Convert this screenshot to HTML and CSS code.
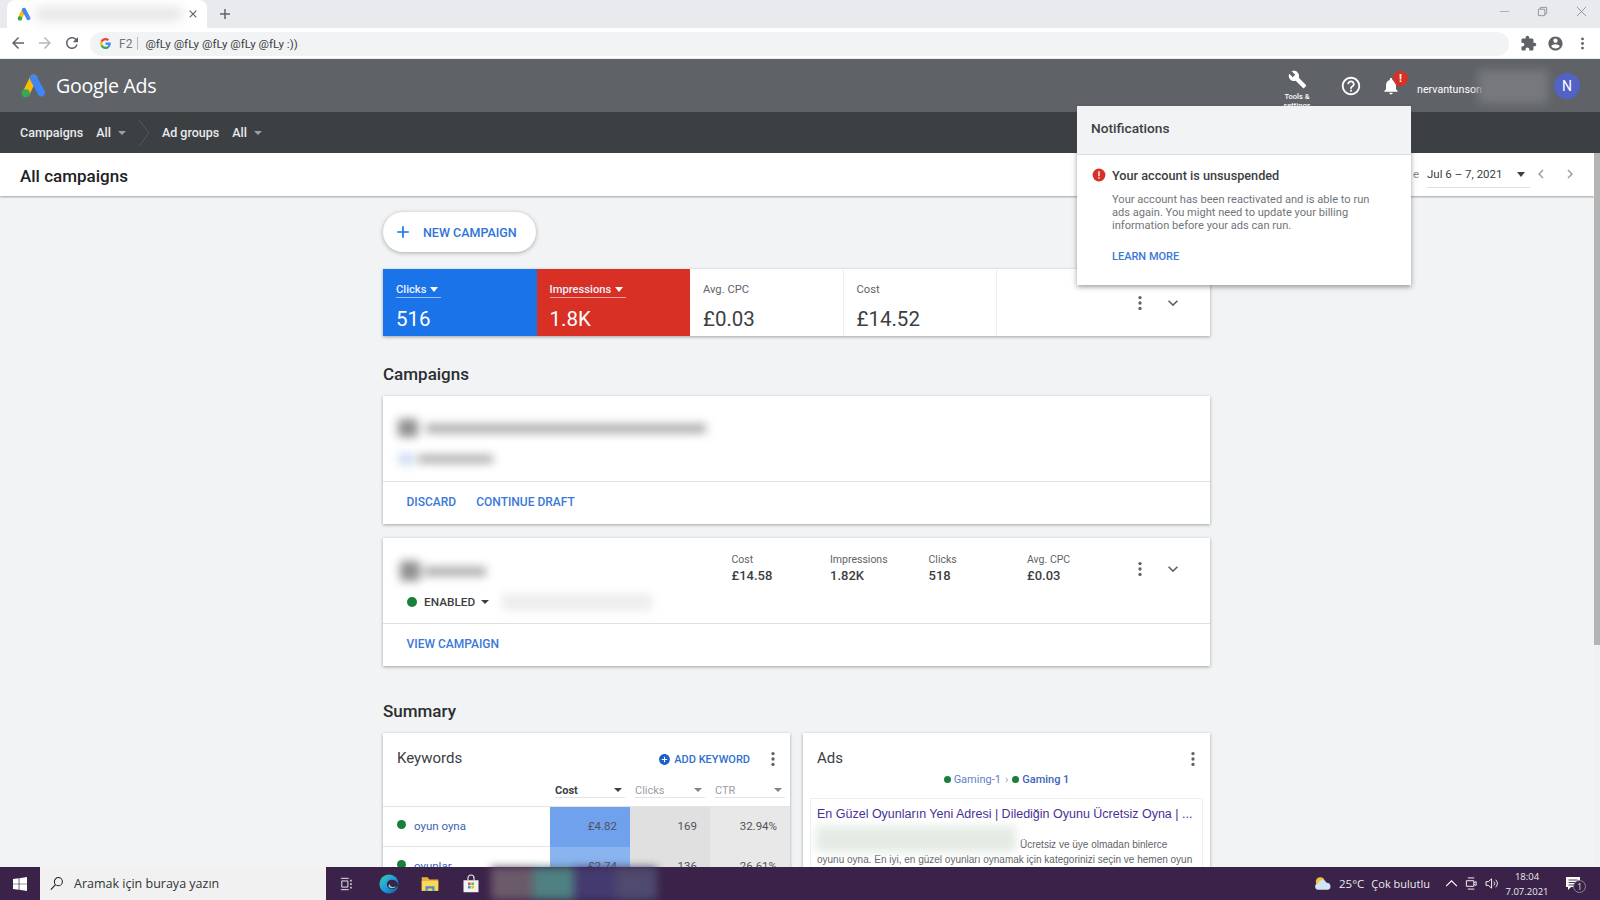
FILE: index.html
```html
<!DOCTYPE html>
<html lang="en">
<head>
<meta charset="utf-8">
<title>Google Ads</title>
<link rel="stylesheet" href="styles.css">
</head>
<body>
<div class="tabstrip">
  <div class="tab">
    <svg class="favicon" viewBox="0 0 24 24"><line x1="12" y1="5" x2="5" y2="19" stroke="#fbbc04" stroke-width="7" stroke-linecap="round"/><line x1="12" y1="5" x2="19.5" y2="19" stroke="#4285f4" stroke-width="7" stroke-linecap="round"/><circle cx="5" cy="19.5" r="3.8" fill="#34a853"/></svg>
    <div class="tab-blur"></div>
    <svg class="tab-x" viewBox="0 0 12 12"><path d="M2 2l8 8M10 2l-8 8" stroke="#5f6368" stroke-width="1.4"/></svg>
  </div>
  <svg class="newtab" viewBox="0 0 12 12"><path d="M6 1v10M1 6h10" stroke="#5f6368" stroke-width="1.5"/></svg>
  <div class="winctl">
    <svg viewBox="0 0 12 12"><path d="M1 6h10" stroke="#a6a9ad" stroke-width="1"/></svg>
    <svg viewBox="0 0 12 12"><path d="M1.5 3.5h7v7h-7zM3.5 3.5v-2h7v7h-2" fill="none" stroke="#8d9094" stroke-width="1"/></svg>
    <svg viewBox="0 0 12 12"><path d="M1 1l10 10M11 1L1 11" stroke="#8d9094" stroke-width="1"/></svg>
  </div>
</div>

<div class="toolbar">
  <svg class="tb-icon" viewBox="0 0 24 24"><path fill="#5f6368" d="M20 11H7.83l5.59-5.59L12 4l-8 8 8 8 1.41-1.41L7.83 13H20v-2z"/></svg>
  <svg class="tb-icon" viewBox="0 0 24 24"><path fill="#b4b7bb" d="M12 4l-1.41 1.41L16.17 11H4v2h12.17l-5.58 5.59L12 20l8-8z"/></svg>
  <svg class="tb-icon" viewBox="0 0 24 24"><path fill="#5f6368" d="M17.65 6.35C16.2 4.9 14.21 4 12 4c-4.42 0-7.99 3.58-7.99 8s3.57 8 7.99 8c3.73 0 6.84-2.55 7.73-6h-2.08c-.82 2.33-3.04 4-5.65 4-3.31 0-6-2.69-6-6s2.69-6 6-6c1.66 0 3.14.69 4.22 1.78L13 11h7V4l-2.35 2.35z"/></svg>
  <div class="omnibox">
    <svg class="g-logo" viewBox="0 0 48 48"><path fill="#ea4335" d="M24 9.5c3.9 0 6.9 1.6 8.9 3.4l6.5-6.4C35.4 2.9 30.2.5 24 .5 14.8.5 6.9 5.8 3 13.5l7.6 5.9C12.4 13.6 17.7 9.5 24 9.5z"/><path fill="#4285f4" d="M47 24.5c0-1.7-.2-3.3-.5-4.5H24v9h12.9c-.6 3.1-2.3 5.7-4.9 7.4l7.4 5.8C43.8 38.1 47 32 47 24.5z"/><path fill="#fbbc05" d="M10.6 28.6c-.5-1.4-.7-2.9-.7-4.6s.3-3.2.7-4.6L3 13.5C1.4 16.7.5 20.2.5 24s.9 7.3 2.5 10.5l7.6-5.9z"/><path fill="#34a853" d="M24 47.5c6.2 0 11.500-2 15.400-5.500L32 36.200c-2.100 1.400-4.700 2.300-8 2.300-6.300 0-11.600-4.100-13.400-9.900L3 34.500C6.900 42.200 14.800 47.500 24 47.500z"/></svg>
    <span class="omni-key">F2</span>
    <span class="omni-sep"></span>
    <span class="omni-text">@fLy @fLy @fLy @fLy @fLy :))</span>
  </div>
  <div class="tb-right">
    <svg viewBox="0 0 24 24"><path fill="#5f6368" d="M20.500 11H19V7c0-1.100-.9-2-2-2h-4V3.500C13 2.120 11.880 1 10.500 1S8 2.120 8 3.500V5H4c-1.100 0-1.990.9-1.990 2v3.800H3.500c1.490 0 2.700 1.210 2.700 2.700s-1.210 2.700-2.700 2.700H2V20c0 1.100.9 2 2 2h3.800v-1.500c0-1.490 1.210-2.700 2.700-2.700 1.490 0 2.700 1.210 2.700 2.700V22H17c1.100 0 2-.9 2-2v-4h1.500c1.380 0 2.500-1.120 2.500-2.500S21.880 11 20.500 11z"/></svg>
    <svg viewBox="0 0 24 24"><path fill="#5f6368" d="M12 2C6.480 2 2 6.480 2 12s4.480 10 10 10 10-4.480 10-10S17.520 2 12 2zm0 3c1.660 0 3 1.340 3 3s-1.340 3-3 3-3-1.340-3-3 1.340-3 3-3zm0 14.200c-2.500 0-4.710-1.280-6-3.220.03-1.990 4-3.080 6-3.080 1.990 0 5.970 1.090 6 3.080-1.290 1.940-3.500 3.220-6 3.220z"/></svg>
    <svg viewBox="0 0 24 24"><g fill="#5f6368"><circle cx="12" cy="5.500" r="2"/><circle cx="12" cy="12" r="2"/><circle cx="12" cy="18.500" r="2"/></g></svg>
  </div>
</div>

<div class="app">
  <header class="hdr">
    <svg class="ads-logo" viewBox="0 0 24 24"><line x1="12" y1="5" x2="5" y2="19" stroke="#fbbc04" stroke-width="7" stroke-linecap="round"/><line x1="12" y1="5" x2="19.500" y2="19" stroke="#4285f4" stroke-width="7" stroke-linecap="round"/><circle cx="4.500" cy="19.500" r="3.900" fill="#34a853"/></svg>
    <span class="ads-name">Google Ads</span>
    <div class="hdr-right">
      <div class="tools">
        <svg viewBox="0 0 24 24"><path fill="#fff" d="M22.700 19l-9.100-9.100c.9-2.300.4-5-1.500-6.900-2-2-5-2.400-7.400-1.300L9 6 6 9 1.600 4.700C.4 7.100.9 10.100 2.900 12.100c1.900 1.900 4.600 2.400 6.900 1.500l9.100 9.100c.4.4 1 .4 1.400 0l2.300-2.300c.5-.4.5-1.100.1-1.400z"/></svg>
        <span>Tools &amp;<br>settings</span>
      </div>
      <svg class="help" viewBox="0 0 24 24"><path fill="#fff" d="M11 18h2v-2h-2v2zm1-16C6.480 2 2 6.480 2 12s4.480 10 10 10 10-4.480 10-10S17.520 2 12 2zm0 18c-4.410 0-8-3.590-8-8s3.590-8 8-8 8 3.590 8 8-3.590 8-8 8zm0-14c-2.210 0-4 1.790-4 4h2c0-1.100.9-2 2-2s2 .9 2 2c0 2-3 1.750-3 5h2c0-2.250 3-2.500 3-5 0-2.210-1.790-4-4-4z"/></svg>
      <div class="bell">
        <svg viewBox="0 0 24 24"><path fill="#fff" d="M12 22c1.100 0 2-.9 2-2h-4c0 1.100.89 2 2 2zm6-6v-5c0-3.070-1.640-5.640-4.500-6.320V4c0-.83-.67-1.500-1.500-1.500s-1.500.67-1.500 1.500v.68C7.630 5.360 6 7.920 6 11v5l-2 2v1h16v-1l-2-2z"/></svg>
        <span class="bell-badge">!</span>
      </div>
      <span class="user">nervantunson</span>
      <div class="user-blur"></div>
      <div class="avatar">N</div>
    </div>
  </header>

  <nav class="nav">
    <span class="nav-item">Campaigns</span>
    <span class="nav-all">All</span><i class="caret nav-caret"></i>
    <svg class="nav-chev" viewBox="0 0 12 26"><path d="M1 0l10 13L1 26" fill="none" stroke="#55595d" stroke-width="1"/></svg>
    <span class="nav-item">Ad groups</span>
    <span class="nav-all">All</span><i class="caret nav-caret"></i>
  </nav>

  <div class="page">
    <main class="main">
      <div class="titlebar">
        <h1>All campaigns</h1>
        <div class="dates">
          <span class="date-clip">e</span>
          <div class="date-select"><span>Jul 6 – 7, 2021</span><i class="caret caret-dark"></i></div>
          <svg viewBox="0 0 24 24"><path fill="#9aa0a6" d="M15.410 7.410L14 6l-6 6 6 6 1.410-1.410L10.830 12z"/></svg>
          <svg viewBox="0 0 24 24"><path fill="#9aa0a6" d="M10 6L8.590 7.410 13.170 12l-4.580 4.590L10 18l6-6z"/></svg>
        </div>
      </div>

      <div class="column">
        <button class="new-btn">
          <svg viewBox="0 0 24 24"><path fill="#1a73e8" d="M19 13h-6v6h-2v-6H5v-2h6V5h2v6h6v2z"/></svg>
          NEW CAMPAIGN
        </button>

        <section class="scorecards card">
          <div class="tile tile-blue"><span class="tile-label">Clicks <i class="caret caret-white"></i></span><span class="tile-value">516</span></div>
          <div class="tile tile-red"><span class="tile-label">Impressions <i class="caret caret-white"></i></span><span class="tile-value">1.8K</span></div>
          <div class="tile"><span class="tile-label">Avg. CPC</span><span class="tile-value">£0.03</span></div>
          <div class="tile"><span class="tile-label">Cost</span><span class="tile-value">£14.52</span></div>
          <div class="tile-end">
            <svg class="dots" viewBox="0 0 24 24"><g fill="#5f6368"><circle cx="12" cy="5.500" r="2"/><circle cx="12" cy="12" r="2"/><circle cx="12" cy="18.500" r="2"/></g></svg>
            <svg class="chev" viewBox="0 0 24 24"><path fill="#5f6368" d="M16.590 8.590L12 13.170 7.410 8.590 6 10l6 6 6-6z"/></svg>
          </div>
        </section>

        <h2 class="sec-campaigns">Campaigns</h2>

        <section class="card draft">
          <div class="draft-body">
            <div class="blur blur-a"><i></i><b></b></div>
            <div class="blur blur-b"><i></i><b></b></div>
          </div>
          <div class="actions"><a>DISCARD</a><a>CONTINUE DRAFT</a></div>
        </section>

        <section class="card camp">
          <div class="camp-body">
            <div class="camp-left">
              <div class="blur blur-c"><i></i><b></b></div>
              <div class="status"><i class="dot dot-green"></i><span>ENABLED</span><i class="caret caret-dark"></i><div class="blur-d"></div></div>
            </div>
            <div class="stats">
              <div class="stat"><span>Cost</span><b>£14.58</b></div>
              <div class="stat"><span>Impressions</span><b>1.82K</b></div>
              <div class="stat"><span>Clicks</span><b>518</b></div>
              <div class="stat"><span>Avg. CPC</span><b>£0.03</b></div>
            </div>
            <div class="tile-end camp-end">
              <svg class="dots" viewBox="0 0 24 24"><g fill="#5f6368"><circle cx="12" cy="5.500" r="2"/><circle cx="12" cy="12" r="2"/><circle cx="12" cy="18.500" r="2"/></g></svg>
              <svg class="chev" viewBox="0 0 24 24"><path fill="#5f6368" d="M16.590 8.590L12 13.170 7.410 8.590 6 10l6 6 6-6z"/></svg>
            </div>
          </div>
          <div class="actions"><a>VIEW CAMPAIGN</a></div>
        </section>

        <h2 class="sec-summary">Summary</h2>

        <div class="summary">
          <section class="card panel">
            <div class="panel-head">
              <h3>Keywords</h3>
              <a class="add-kw"><svg viewBox="0 0 24 24"><path fill="#1a62c8" d="M12 2C6.480 2 2 6.480 2 12s4.480 10 10 10 10-4.480 10-10S17.520 2 12 2zm5 11h-4v4h-2v-4H7v-2h4V7h2v4h4v2z"/></svg>ADD KEYWORD</a>
              <svg class="dots" viewBox="0 0 24 24"><g fill="#5f6368"><circle cx="12" cy="5.500" r="2"/><circle cx="12" cy="12" r="2"/><circle cx="12" cy="18.500" r="2"/></g></svg>
            </div>
            <div class="kw-cols">
              <div class="kw-col kw-col-on"><span>Cost</span><i class="caret caret-dark"></i></div>
              <div class="kw-col"><span>Clicks</span><i class="caret caret-grey"></i></div>
              <div class="kw-col"><span>CTR</span><i class="caret caret-grey"></i></div>
            </div>
            <div class="kw-row">
              <div class="kw-name"><i class="dot dot-green2"></i><a>oyun oyna</a></div>
              <div class="kw-num kw-b1">£4.82</div><div class="kw-num kw-g1">169</div><div class="kw-num kw-g2">32.94%</div>
            </div>
            <div class="kw-row">
              <div class="kw-name"><i class="dot dot-green2"></i><a>oyunlar</a></div>
              <div class="kw-num kw-b2">£2.74</div><div class="kw-num kw-g1">136</div><div class="kw-num kw-g2">26.61%</div>
            </div>
          </section>
          <section class="card panel">
            <div class="panel-head ads-head">
              <h3>Ads</h3>
              <svg class="dots" viewBox="0 0 24 24"><g fill="#5f6368"><circle cx="12" cy="5.500" r="2"/><circle cx="12" cy="12" r="2"/><circle cx="12" cy="18.500" r="2"/></g></svg>
            </div>
            <div class="crumbs"><i class="dot dot-crumb"></i><a>Gaming-1</a><em>›</em><i class="dot dot-crumb"></i><a class="strong">Gaming 1</a></div>
            <div class="ad-box">
              <div class="ad-title">En Güzel Oyunların Yeni Adresi | Dilediğin Oyunu Ücretsiz Oyna | ...</div>
              <div class="ad-line"><div class="ad-blur"></div><span>Ücretsiz ve üye olmadan binlerce</span></div>
              <div class="ad-text">oyunu oyna. En iyi, en güzel oyunları oynamak için kategorinizi seçin ve hemen oyun</div>
            </div>
          </section>
        </div>
      </div>
    </main>
    <div class="scrollbar"><div class="thumb"></div></div>
  </div>

  <aside class="notif">
    <div class="notif-head">Notifications</div>
    <div class="notif-body">
      <div class="notif-title">
        <svg viewBox="0 0 24 24"><circle cx="12" cy="12" r="11" fill="#d93025"/><path fill="#fff" d="M10.800 5.500h2.400v8.500h-2.400zM10.800 15.800h2.400v2.500h-2.400z"/></svg>
        <span>Your account is unsuspended</span>
      </div>
      <p>Your account has been reactivated and is able to run ads again. You might need to update your billing information before your ads can run.</p>
      <a>LEARN MORE</a>
    </div>
  </aside>
</div>

<footer class="taskbar">
  <svg class="tk-win" viewBox="0 0 16 16"><path fill="#fff" d="M0 2.300l6.500-.9v6.200H0zM7.300 1.300L16 0v7.600H7.300zM0 8.400h6.500v6.200L0 13.700zM7.300 8.400H16V16l-8.700-1.300z"/></svg>
  <div class="tk-search">
    <svg viewBox="0 0 16 16"><circle cx="10" cy="6" r="4.300" fill="none" stroke="#222" stroke-width="1.100"/><path d="M7 9.300L2 14.500" stroke="#222" stroke-width="1.200"/></svg>
    <span>Aramak için buraya yazın</span>
  </div>
  <svg class="tk-view" viewBox="0 0 16 16"><path d="M1 1.500h9M1 14.500h9M2 4.500h7v7H2z" fill="none" stroke="#fff" stroke-width="1"/><path d="M12.500 3v2M12.500 7v2M12.500 11v2" stroke="#fff" stroke-width="1.500"/></svg>
  <svg class="tk-app tk-edge" viewBox="0 0 24 24"><defs><linearGradient id="edgeg" x1="0" y1="0" x2="1" y2="1"><stop offset="0" stop-color="#3bd3a0"/><stop offset=".5" stop-color="#1f9be0"/><stop offset="1" stop-color="#0c59a4"/></linearGradient></defs><circle cx="12" cy="12" r="11.500" fill="url(#edgeg)"/><path fill="#3a2249" d="M23 13c-1-4-4-6-7.500-6C12 7 9.500 9.500 9.500 12.500c0 3 2.500 5.500 6 5.500 2.500 0 5-1 6.500-2.500l1-2.500z"/><path fill="#7be0b4" d="M21 15c-1.500 1.500-3.500 2-5.500 2-2.500 0-4-1.500-4-3 0-1 .7-1.600 1.500-2-.5 2 1.500 3.500 3.500 3.500 1.800 0 3.200-.2 4.500-.5z"/></svg>
  <svg class="tk-app tk-folder" viewBox="0 0 24 24"><path fill="#e8b33a" d="M1 3h8l2 3h12v15H1z"/><path fill="#fbd75b" d="M1 8h22v13H1z"/><path fill="#4a8fc7" d="M6 21v-6h12v6h-3v-3H9v3z"/></svg>
  <svg class="tk-app tk-store" viewBox="0 0 24 24"><path d="M8 7V4a4 4 0 0 1 8 0v3" fill="none" stroke="#e8e8e8" stroke-width="1.600"/><path fill="#f2f2f2" d="M2 7h20v16H2z"/><path fill="#e8502f" d="M8 10h3.500v3.500H8z"/><path fill="#7cb82f" d="M12.500 10H16v3.500h-3.500z"/><path fill="#1ea1e8" d="M8 14.500h3.500V18H8z"/><path fill="#fcb813" d="M12.500 14.500H16V18h-3.500z"/></svg>
  <div class="tk-blur"><i></i><i></i><i></i><i></i></div>
  <div class="tk-tray">
    <svg class="tk-cloud" viewBox="0 0 20 16"><circle cx="7" cy="6" r="5" fill="#f5c542"/><path fill="#cfe6f7" d="M5 15a3.500 3.500 0 0 1-.4-7 5 5 0 0 1 9.400-.8A4 4 0 0 1 15.500 15z"/></svg>
    <span class="tk-temp">25°C</span>
    <span class="tk-weather">Çok bulutlu</span>
    <svg class="tk-sm tk-up" viewBox="0 0 12 12"><path d="M1 8.500l5-5 5 5" fill="none" stroke="#fff" stroke-width="1"/></svg>
    <svg class="tk-sm tk-cam" viewBox="0 0 14 14"><path d="M3 1h7M3 13h7M1.500 4h8v6h-8zM9.500 6l2.500-1v4l-2.500-1" fill="none" stroke="#fff" stroke-width="1"/></svg>
    <svg class="tk-sm tk-vol" viewBox="0 0 16 14"><path d="M1 5v4h2.500L7 12V2L3.500 5zM9.500 5a3 3 0 0 1 0 4M11.500 3a6 6 0 0 1 0 8" fill="none" stroke="#fff" stroke-width="1"/></svg>
    <div class="tk-clock"><span>18:04</span><span>7.07.2021</span></div>
    <div class="tk-notif">
      <svg viewBox="0 0 14 14"><path fill="#fff" d="M0 0h14v10H5l-3 3v-3H0z"/><path d="M2.500 3h9M2.500 5.500h9M2.500 8h6" stroke="#3a2249" stroke-width=".9"/></svg>
      <span>1</span>
    </div>
  </div>
</footer>
</body>
</html>
```
FILE: styles.css
```css
* { box-sizing: border-box; }
html, body { margin: 0; padding: 0; }
body {
  width: 1600px; height: 900px; overflow: hidden;
  display: flex; flex-direction: column;
  font-family: Roboto, "Liberation Sans", sans-serif;
  background: #f1f3f4; color: #202124;
}
h1, h2, h3, p { margin: 0; }
i { display: block; }
a { cursor: pointer; }

.caret { width: 0; height: 0; border-left: 4.5px solid transparent; border-right: 4.5px solid transparent; border-top: 5px solid #fff; }
.caret-white { display: inline-block; border-top-color: #fff; margin-left: 1px; vertical-align: 1px; }
.caret-dark { border-top-color: #3c4043; }
.caret-grey { border-top-color: #80868b; }

/* browser chrome */
.tabstrip { height: 28px; flex: none; background: #e8eaed; display: flex; align-items: flex-end; position: relative; }
.tab { margin-left: 7px; width: 200px; height: 28px; background: #fff; border-radius: 8px 8px 0 0; display: flex; align-items: center; }
.favicon { width: 14px; height: 14px; margin-left: 10px; flex: none; }
.tab-blur { width: 146px; height: 14px; margin-left: 5px; background: #e4e5e6; filter: blur(6px); }
.tab-x { width: 10px; height: 10px; margin-left: 6px; }
.newtab { width: 12px; height: 12px; margin: 0 0 8px 12px; }
.winctl { margin-left: auto; display: flex; gap: 27.5px; align-self: flex-start; margin-top: 6px; margin-right: 13.5px; }
.winctl svg { width: 11px; height: 11px; }

.toolbar { height: 31px; flex: none; background: #fff; display: flex; align-items: center; padding-left: 9px; border-bottom: 1px solid #e8eaed; }
.tb-icon { width: 18px; height: 18px; margin-right: 9px; }
.omnibox { width: 1419px; height: 24px; margin-top: 1px; background: #f1f3f4; border-radius: 12px; display: flex; align-items: center; }
.g-logo { width: 11px; height: 11px; margin-left: 10px; }
.omni-key { font-size: 12px; color: #70757a; margin-left: 8px; }
.omni-sep { width: 1px; height: 13px; background: #b8bbbe; margin: 0 7px 0 5px; }
.omni-text { font-size: 11.6px; color: #3c4043; }
.tb-right { display: flex; align-items: center; margin-left: 11px; gap: 10px; }
.tb-right svg { width: 17px; height: 17px; }

/* app */
.app { flex: 1; min-height: 0; position: relative; display: flex; flex-direction: column; }
.hdr { height: 53px; flex: none; background: #5f6368; display: flex; align-items: center; padding-left: 21px; }
.ads-logo { width: 25px; height: 25px; }
.ads-name { color: #fff; font-size: 19.6px; margin-left: 10px; margin-top: 0; font-family: "Open Sans", Roboto, sans-serif; letter-spacing: -.3px; }
.hdr-right { margin-left: auto; display: flex; align-items: center; height: 100%; }
.tools { width: 50px; height: 53px; color: #fff; text-align: center; font-size: 7.5px; font-weight: 500; line-height: 9px; display: flex; flex-direction: column; align-items: center; padding-top: 11px; }
.tools svg { width: 19px; height: 19px; margin-bottom: 3px; }
.help { width: 22px; height: 22px; margin-left: 18px; }
.bell { position: relative; width: 20px; height: 20px; margin-left: 19px; margin-top: 1px; }
.bell svg { width: 20px; height: 20px; }
.bell-badge { position: absolute; left: 12px; top: -5px; width: 15px; height: 15px; border-radius: 50%; background: #d93025; color: #fff; font-size: 11px; font-weight: 700; text-align: center; line-height: 15px; }
.user { color: #fff; font-size: 10.7px; margin-left: 16px; margin-top: 8px; width: 61px; flex: none; white-space: nowrap; }
.user-blur { width: 70px; height: 34px; background: #77797c; filter: blur(5px); margin-top: 2px; }
.avatar { width: 26px; height: 26px; border-radius: 50%; background: #5262c5; color: #fff; font-size: 14px; text-align: center; line-height: 26px; margin-left: 6px; margin-right: 20px; }

.nav { height: 41px; flex: none; background: #3c4043; display: flex; align-items: center; padding-left: 20px; color: #e8eaed; font-size: 12.5px; font-weight: 500; }
.nav-all { margin-left: 13px; }
.nav-caret { margin-left: 7px; border-top-color: #9aa0a6; border-left-width: 4px; border-right-width: 4px; border-top-width: 4px; }
.nav-chev { width: 12px; height: 26px; margin: 0 12px 0 12px; }

.page { flex: 1; min-height: 0; display: flex; }
.main { flex: 1; min-width: 0; overflow: hidden; }
.scrollbar { width: 6px; background: #f1f1f1; }
.thumb { height: 492px; background: #b4b4b4; }

.titlebar { height: 43px; background: #fff; box-shadow: 0 1px 2px rgba(60,64,67,.45); display: flex; align-items: center; padding-left: 20px; position: relative; }
.titlebar h1 { font-size: 17px; font-weight: 500; color: #202124; margin-top: 2px; }
.dates { margin-left: auto; display: flex; align-items: center; font-size: 11.5px; color: #3c4043; margin-right: 15px; margin-top: -2px; }
.date-clip { margin-right: 8px; color: #80868b; }
.date-select { width: 103px; height: 26px; border-bottom: 1px solid #e0e0e0; display: flex; align-items: center; justify-content: space-between; padding-right: 5px; margin-top: 2px; }
.dates svg { width: 18px; height: 18px; margin-left: 2px; }
.dates svg + svg { margin-left: 11px; }

.column { width: 827px; margin-left: 383px; display: flex; flex-direction: column; }
.card { background: #fff; box-shadow: 0 1px 3px rgba(60,64,67,.45); }

.new-btn { align-self: flex-start; margin-top: 16px; width: 153px; height: 40px; border: 0; border-radius: 20px; background: #fff; box-shadow: 0 1px 4px rgba(60,64,67,.4); color: #2f74d8; font: 500 12.5px Roboto, sans-serif; display: flex; align-items: center; padding: 0 0 0 10px; gap: 10px; }
.new-btn svg { width: 20px; height: 20px; }

.scorecards { margin-top: 17px; height: 67px; display: grid; grid-template-columns: repeat(4, 153.5px) 1fr; }
.tile { padding: 13px 0 0 13px; display: flex; flex-direction: column; align-items: flex-start; border-right: 1px solid #eceded; }
.tile-label { font-size: 11.2px; font-weight: 500; color: #5f6368; height: 16px; line-height: 15px; }
.tile:nth-child(n+3) .tile-label { font-weight: 400; }
.tile-value { font-size: 20.5px; color: #3c4043; margin-top: 8px; line-height: 26px; }
.tile-blue { background: #1a73e8; border: 0; }
.tile-red { background: #d93025; border: 0; }
.tile-blue .tile-label, .tile-red .tile-label { color: #e8f0fe; border-bottom: 1px solid rgba(255,255,255,.55); padding-right: 3px; }
.tile-blue .tile-value, .tile-red .tile-value { color: #fff; }
.tile-end { display: flex; align-items: center; justify-content: flex-end; padding-right: 27px; gap: 13px; }
.dots { width: 20px; height: 20px; flex: none; }
.chev { width: 20px; height: 20px; flex: none; }

h2 { font-size: 17px; font-weight: 500; color: #2b2d30; line-height: 22px; }
.sec-campaigns { margin-top: 27px; }
.draft { margin-top: 11px; height: 128px; display: flex; flex-direction: column; }
.draft-body { height: 86px; border-bottom: 1px solid #e0e0e0; padding: 21px 0 0 15px; }
.actions { flex: 1; display: flex; align-items: center; padding-left: 23.5px; gap: 20px; margin-top: -2px; }
.actions a { color: #3b78d8; font-size: 12px; font-weight: 500; }

.blur { display: flex; align-items: center; filter: blur(5px); }
.blur i { background: #8f8f8f; border-radius: 3px; }
.blur b { display: block; background: #a8a8a8; }
.blur-a { width: 315px; height: 22px; }
.blur-a i { width: 20px; height: 18px; margin-right: 8px; }
.blur-a b { width: 280px; height: 9px; }
.blur-b { width: 105px; height: 14px; margin-top: 13px; }
.blur-b i { width: 16px; height: 12px; background: #cfdcf6; margin-right: 4px; }
.blur-b b { width: 75px; height: 8px; }

.camp { margin-top: 14px; height: 128px; display: flex; flex-direction: column; }
.camp-body { height: 86px; border-bottom: 1px solid #e0e0e0; display: flex; align-items: flex-start; }
.camp-left { width: 348.5px; padding: 22px 0 0 17px; }
.blur-c { width: 96px; height: 22px; }
.blur-c i { width: 20px; height: 20px; margin-right: 4px; }
.blur-c b { width: 62px; height: 9px; }
.status { display: flex; align-items: center; margin-top: 10px; margin-left: 7px; font-size: 11.8px; color: #3c4043; font-weight: 500; height: 20px; }
.dot { border-radius: 50%; flex: none; }
.dot-green { width: 10px; height: 10px; background: #188038; margin-right: 7px; }
.status .caret { margin-left: 6px; border-left-width: 4px; border-right-width: 4px; border-top-width: 4px; }
.blur-d { width: 150px; height: 18px; margin-left: 13px; background: #eee; filter: blur(4px); }
.stats { display: flex; padding-top: 15px; }
.stat { width: 98.5px; display: flex; flex-direction: column; }
.stat span { font-size: 10.5px; color: #5f6368; line-height: 14px; }
.stat b { font-size: 13px; font-weight: 500; color: #3c4043; line-height: 18px; }
.camp-end { margin-left: auto; margin-top: 21px; }

.sec-summary { margin-top: 34px; }
.summary { margin-top: 11px; display: grid; grid-template-columns: 407px 407px; gap: 13px; }
.panel { height: 140px; overflow: hidden; }
.panel-head { height: 50px; display: flex; align-items: center; padding: 0 7px 0 14px; }
.panel-head h3 { font-size: 15px; font-weight: 400; color: #3c4043; }
.panel-head .dots { margin-left: 13px; margin-top: 2px; }
.add-kw { margin-left: auto; display: flex; align-items: center; color: #2f6fd0; font-size: 11px; font-weight: 500; margin-top: 2px; }
.add-kw svg { width: 13px; height: 13px; margin-right: 3px; }
.ads-head { justify-content: space-between; padding-left: 14px; height: 50px; }

.kw-cols { height: 24px; display: grid; grid-template-columns: repeat(3, 80px); justify-content: end; border-bottom: 1px solid #e4e4e4; }
.kw-col { width: 70px; margin-left: 5px; height: 15px; display: flex; align-items: center; justify-content: space-between; font-size: 11px; color: #9aa0a6; border-bottom: 1px solid #e4e4e4; }
.kw-col .caret { border-left-width: 4px; border-right-width: 4px; border-top-width: 4px; margin-right: 3px; }
.kw-col-on { color: #3c4043; font-weight: 700; }
.kw-row { display: grid; grid-template-columns: 167px repeat(3, 80px); height: 40px; }
.kw-name { display: flex; align-items: center; padding: 0 0 2px 14px; border-bottom: 1px solid #e4e4e4; }
.kw-name a { font-size: 11.5px; color: #3c62b8; margin-left: 8px; }
.dot-green2 { width: 9px; height: 9px; background: #188038; margin-top: -2px; }
.kw-num { display: flex; align-items: center; justify-content: flex-end; padding: 0 13px 2px 0; font-size: 11.5px; color: #4f5459; }
.kw-b1 { background: #6fa1ec; }
.kw-b2 { background: #8ab4f0; }
.kw-g1 { background: #e0e0e0; }
.kw-g2 { background: #e8e8e8; }

.crumbs { display: flex; align-items: center; justify-content: center; font-size: 11px; color: #5f7fc8; height: 14px; margin-top: -11px; }
.crumbs em { font-style: normal; color: #9aa0a6; margin: 0 4px; }
.crumbs .strong { font-weight: 500; color: #3c66b8; }
.dot-crumb { width: 7px; height: 7px; background: #188038; margin-right: 3px; }
.ad-box { margin: 12px 7px 0; border: 1px solid #efefef; padding: 7px 6px 0 6px; height: 80px; font-family: "Liberation Sans", Arial, sans-serif; }
.ad-title { font-size: 12.5px; color: #4a2f96; line-height: 16px; white-space: nowrap; }
.ad-line { display: flex; align-items: flex-end; height: 30px; margin-left: -1px; position: relative; }
.ad-blur { width: 200px; height: 26px; background: #e3ebe4; filter: blur(5px); margin-right: 4px; }
.ad-line span, .ad-text { font-size: 10px; color: #5f6368; line-height: 15px; white-space: nowrap; }

/* notifications */
.notif { position: absolute; left: 1077px; top: 47px; width: 334px; height: 179px; background: #fff; box-shadow: 0 2px 5px rgba(60,64,67,.5); }
.notif-head { height: 49px; background: #f1f3f4; border-bottom: 1px solid #dadce0; padding: 0 0 4px 14px; display: flex; align-items: center; font-size: 13.7px; font-weight: 500; color: #3c4043; }
.notif-body { padding: 12px 0 0 35px; position: relative; }
.notif-title { display: flex; align-items: center; font-size: 12.7px; font-weight: 500; color: #3c4043; height: 16px; }
.notif-title svg { position: absolute; left: 15px; top: 13px; width: 14px; height: 14px; }
.notif p { font-size: 11.1px; line-height: 13px; color: #70757a; margin-top: 10px; width: 272px; }
.notif a { display: block; margin-top: 18px; font-size: 11px; font-weight: 500; color: #3b78d8; }

/* taskbar */
.taskbar { height: 33px; flex: none; background: #3a2249; display: flex; align-items: center; position: relative; }
.tk-win { width: 14px; height: 14px; margin-left: 13px; }
.tk-search { width: 286px; height: 33px; margin-left: 13px; background: #f1f1f1; display: flex; align-items: center; padding-left: 9px; font-family: "Open Sans", sans-serif; font-size: 12.5px; color: #333; }
.tk-search svg { width: 15px; height: 15px; margin-right: 10px; }
.tk-view { width: 14px; height: 14px; margin-left: 14px; }
.tk-app { width: 20px; height: 22px; }
.tk-edge { margin-left: 25px; }
.tk-folder { margin-left: 22px; width: 18px; height: 18px; }
.tk-store { margin-left: 23px; width: 18px; height: 20px; }
.tk-blur { width: 166px; height: 33px; margin-left: 11px; display: flex; background: #4a3a5e; filter: blur(4px); overflow: hidden; }
.tk-blur i { flex: 1; }
.tk-blur i:nth-child(1) { background: #6b5a6a; }
.tk-blur i:nth-child(2) { background: #4f8082; }
.tk-blur i:nth-child(3) { background: #453a70; }
.tk-blur i:nth-child(4) { background: #4f4a6e; }
.tk-tray { margin-left: auto; display: flex; align-items: center; color: #ececec; font-family: "Open Sans", sans-serif; font-size: 11.5px; height: 100%; padding-right: 20px; }
.tk-cloud { width: 18px; height: 15px; }
.tk-temp { margin-left: 7px; }
.tk-weather { margin-left: 7px; font-size: 11px; }
.tk-sm { width: 13px; height: 13px; }
.tk-up { margin-left: 15px; }
.tk-cam { margin-left: 7px; }
.tk-vol { margin-left: 7px; width: 15px; }
.tk-clock { margin-left: 6px; display: flex; flex-direction: column; align-items: center; font-size: 9.5px; line-height: 15px; width: 42px; }
.tk-notif { margin-left: 18px; position: relative; width: 14px; height: 14px; }
.tk-notif svg { width: 14px; height: 14px; display: block; }
.tk-notif span { position: absolute; left: 7px; top: 3px; width: 13px; height: 13px; border-radius: 50%; background: #3a2249; border: 1px solid #888; font-size: 9px; line-height: 11px; text-align: center; color: #ddd; }
```
